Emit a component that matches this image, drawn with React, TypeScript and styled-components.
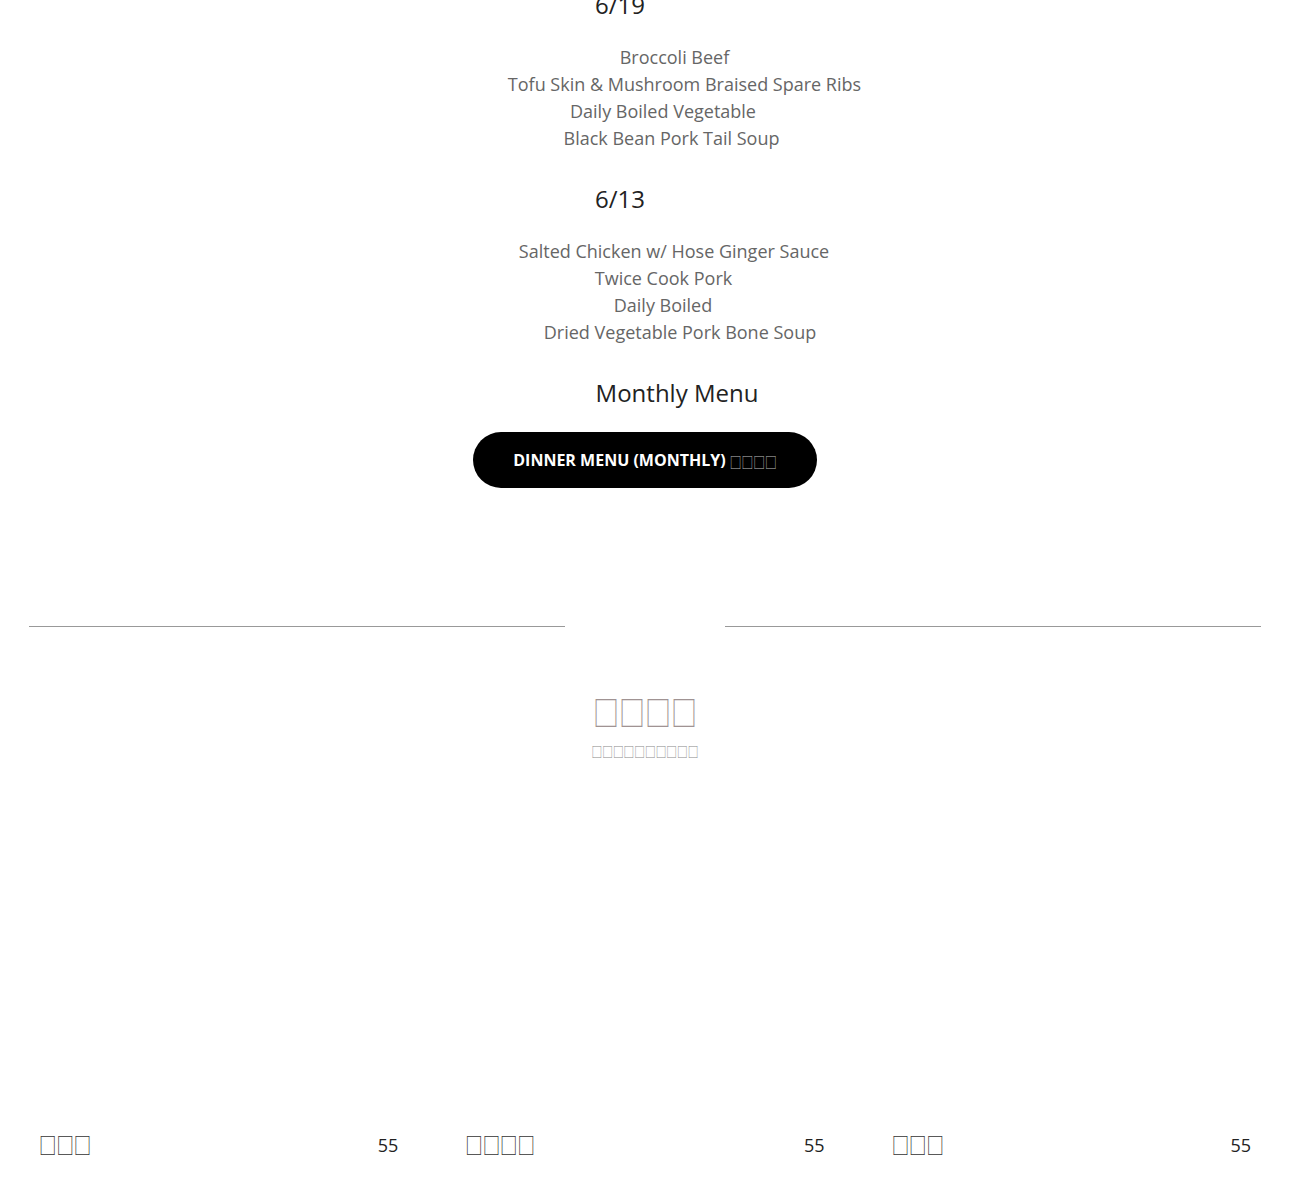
import styled, { createGlobalStyle } from "styled-components";

const GlobalStyle = createGlobalStyle`
  body {
    margin: 0;
    background: #fff;
    font-family: "Open Sans", "Liberation Sans", sans-serif;
  }
`;

interface Day {
  date: string;
  dishes: { name: string; shift: number }[];
}

const days: Day[] = [
  {
    date: "6/19",
    dishes: [
      { name: "Broccoli Beef", shift: 29.5 },
      { name: "Tofu Skin & Mushroom Braised Spare Ribs", shift: 39.5 },
      { name: "Daily Boiled Vegetable", shift: 18 },
      { name: "Black Bean Pork Tail Soup", shift: 26.5 },
    ],
  },
  {
    date: "6/13",
    dishes: [
      { name: "Salted Chicken w/ Hose Ginger Sauce", shift: 29 },
      { name: "Twice Cook Pork", shift: 18.5 },
      { name: "Daily Boiled", shift: 18 },
      { name: "Dried Vegetable Pork Bone Soup", shift: 35 },
    ],
  },
];

const items = [
  { name: "□□□", price: 55 },
  { name: "□□□□", price: 55 },
  { name: "□□□", price: 55 },
];

const App = (): JSX.Element => {
  return (
    <Page>
      <GlobalStyle />
      <MenuSection>
        {days.map((day) => (
          <DayBlock key={day.date}>
            <Heading $shift={-25}>{day.date}</Heading>
            <Dishes>
              {day.dishes.map((dish) => (
                <Dish key={dish.name} $shift={dish.shift}>
                  {dish.name}
                </Dish>
              ))}
            </Dishes>
          </DayBlock>
        ))}
        <MonthlyHeading $shift={32}>Monthly Menu</MonthlyHeading>
        <PillButton>
          DINNER MENU (MONTHLY) <Boxes $size={11.75}>□□□□</Boxes>
        </PillButton>
      </MenuSection>

      <Divider>
        <Rule />
        <Rule />
      </Divider>

      <TitleBlock>
        <Title>
          <Boxes $size={26}>□□□□</Boxes>
        </Title>
        <Subtitle>
          <Boxes $size={10.7}>□□□□□□□□□□</Boxes>
        </Subtitle>
      </TitleBlock>

      <CardGrid>
        {items.map((item, i) => (
          <Card key={i}>
            <CardImage />
            <CardRow>
              <CardName>
                <Boxes $size={17.4}>{item.name}</Boxes>
              </CardName>
              <CardPrice>{item.price}</CardPrice>
            </CardRow>
          </Card>
        ))}
      </CardGrid>
    </Page>
  );
};

const Page = styled.div`
  width: 1290px;
  height: 1193px;
  overflow: hidden;
`;

// the Chinese labels show as empty boxes in the reference
const Boxes = styled.span<{ $size: number }>`
  display: inline-block;
  font-family: "Noto Sans CJK SC", sans-serif;
  font-size: ${(p) => p.$size}px;
  font-weight: 400;
  line-height: 1;
  transform: scaleY(1.3);
`;

const MenuSection = styled.section`
  display: flex;
  flex-direction: column;
  align-items: center;
  margin-top: -11px;
`;

const DayBlock = styled.div`
  display: flex;
  flex-direction: column;
  align-items: center;

  & + & {
    margin-top: 31.5px;
  }
`;

const Heading = styled.h3<{ $shift: number }>`
  margin: 0;
  font-size: 24px;
  font-weight: 400;
  line-height: 32px;
  color: #222;
  padding-left: ${(p) => (p.$shift > 0 ? p.$shift * 2 : 0)}px;
  padding-right: ${(p) => (p.$shift < 0 ? -p.$shift * 2 : 0)}px;
`;

const MonthlyHeading = styled(Heading)`
  margin-top: 31.5px;
`;

const Dishes = styled.div`
  display: flex;
  flex-direction: column;
  align-items: center;
  margin-top: 22.5px;
`;

const Dish = styled.div<{ $shift: number }>`
  font-size: 18px;
  line-height: 27px;
  color: #666;
  white-space: nowrap;
  padding-left: ${(p) => (p.$shift > 0 ? p.$shift * 2 : 0)}px;
  padding-right: ${(p) => (p.$shift < 0 ? -p.$shift * 2 : 0)}px;
`;

const PillButton = styled.button`
  margin-top: 23px;
  width: 344px;
  height: 56px;
  border: none;
  border-radius: 28px;
  background: #000;
  color: #fff;
  font-family: "Open Sans", "Liberation Sans", sans-serif;
  font-size: 16px;
  font-weight: 700;
  cursor: pointer;

  & ${Boxes} {
    color: #bbb;
  }
`;

const Divider = styled.div`
  display: flex;
  gap: 160px;
  padding: 0 29px;
  margin-top: 137.5px;
`;

const Rule = styled.div`
  flex: 1;
  height: 1px;
  background: #999;
`;

const TitleBlock = styled.div`
  display: flex;
  flex-direction: column;
  align-items: center;
  margin-top: 63px;
`;

const Title = styled.h2`
  margin: 0;
  font-weight: 400;
  line-height: 48px;
  color: #a09393;
`;

const Subtitle = styled.p`
  margin: 0;
  line-height: 24px;
  color: #888;
`;

const CardGrid = styled.div`
  display: grid;
  grid-template-columns: repeat(3, 1fr);
  column-gap: 47px;
  padding: 0 29px;
  margin-top: 20px;
`;

const Card = styled.div`
  display: flex;
  flex-direction: column;
`;

const CardImage = styled.div`
  height: 344px;
`;

const CardRow = styled.div`
  display: flex;
  justify-content: space-between;
  align-items: baseline;
  padding: 0 10px;
`;

const CardName = styled.span`
  font-size: 24px;
  line-height: 34px;
  color: #333;
`;

const CardPrice = styled.span`
  font-size: 18px;
  line-height: 34px;
  color: #222;
`;

export default App;
